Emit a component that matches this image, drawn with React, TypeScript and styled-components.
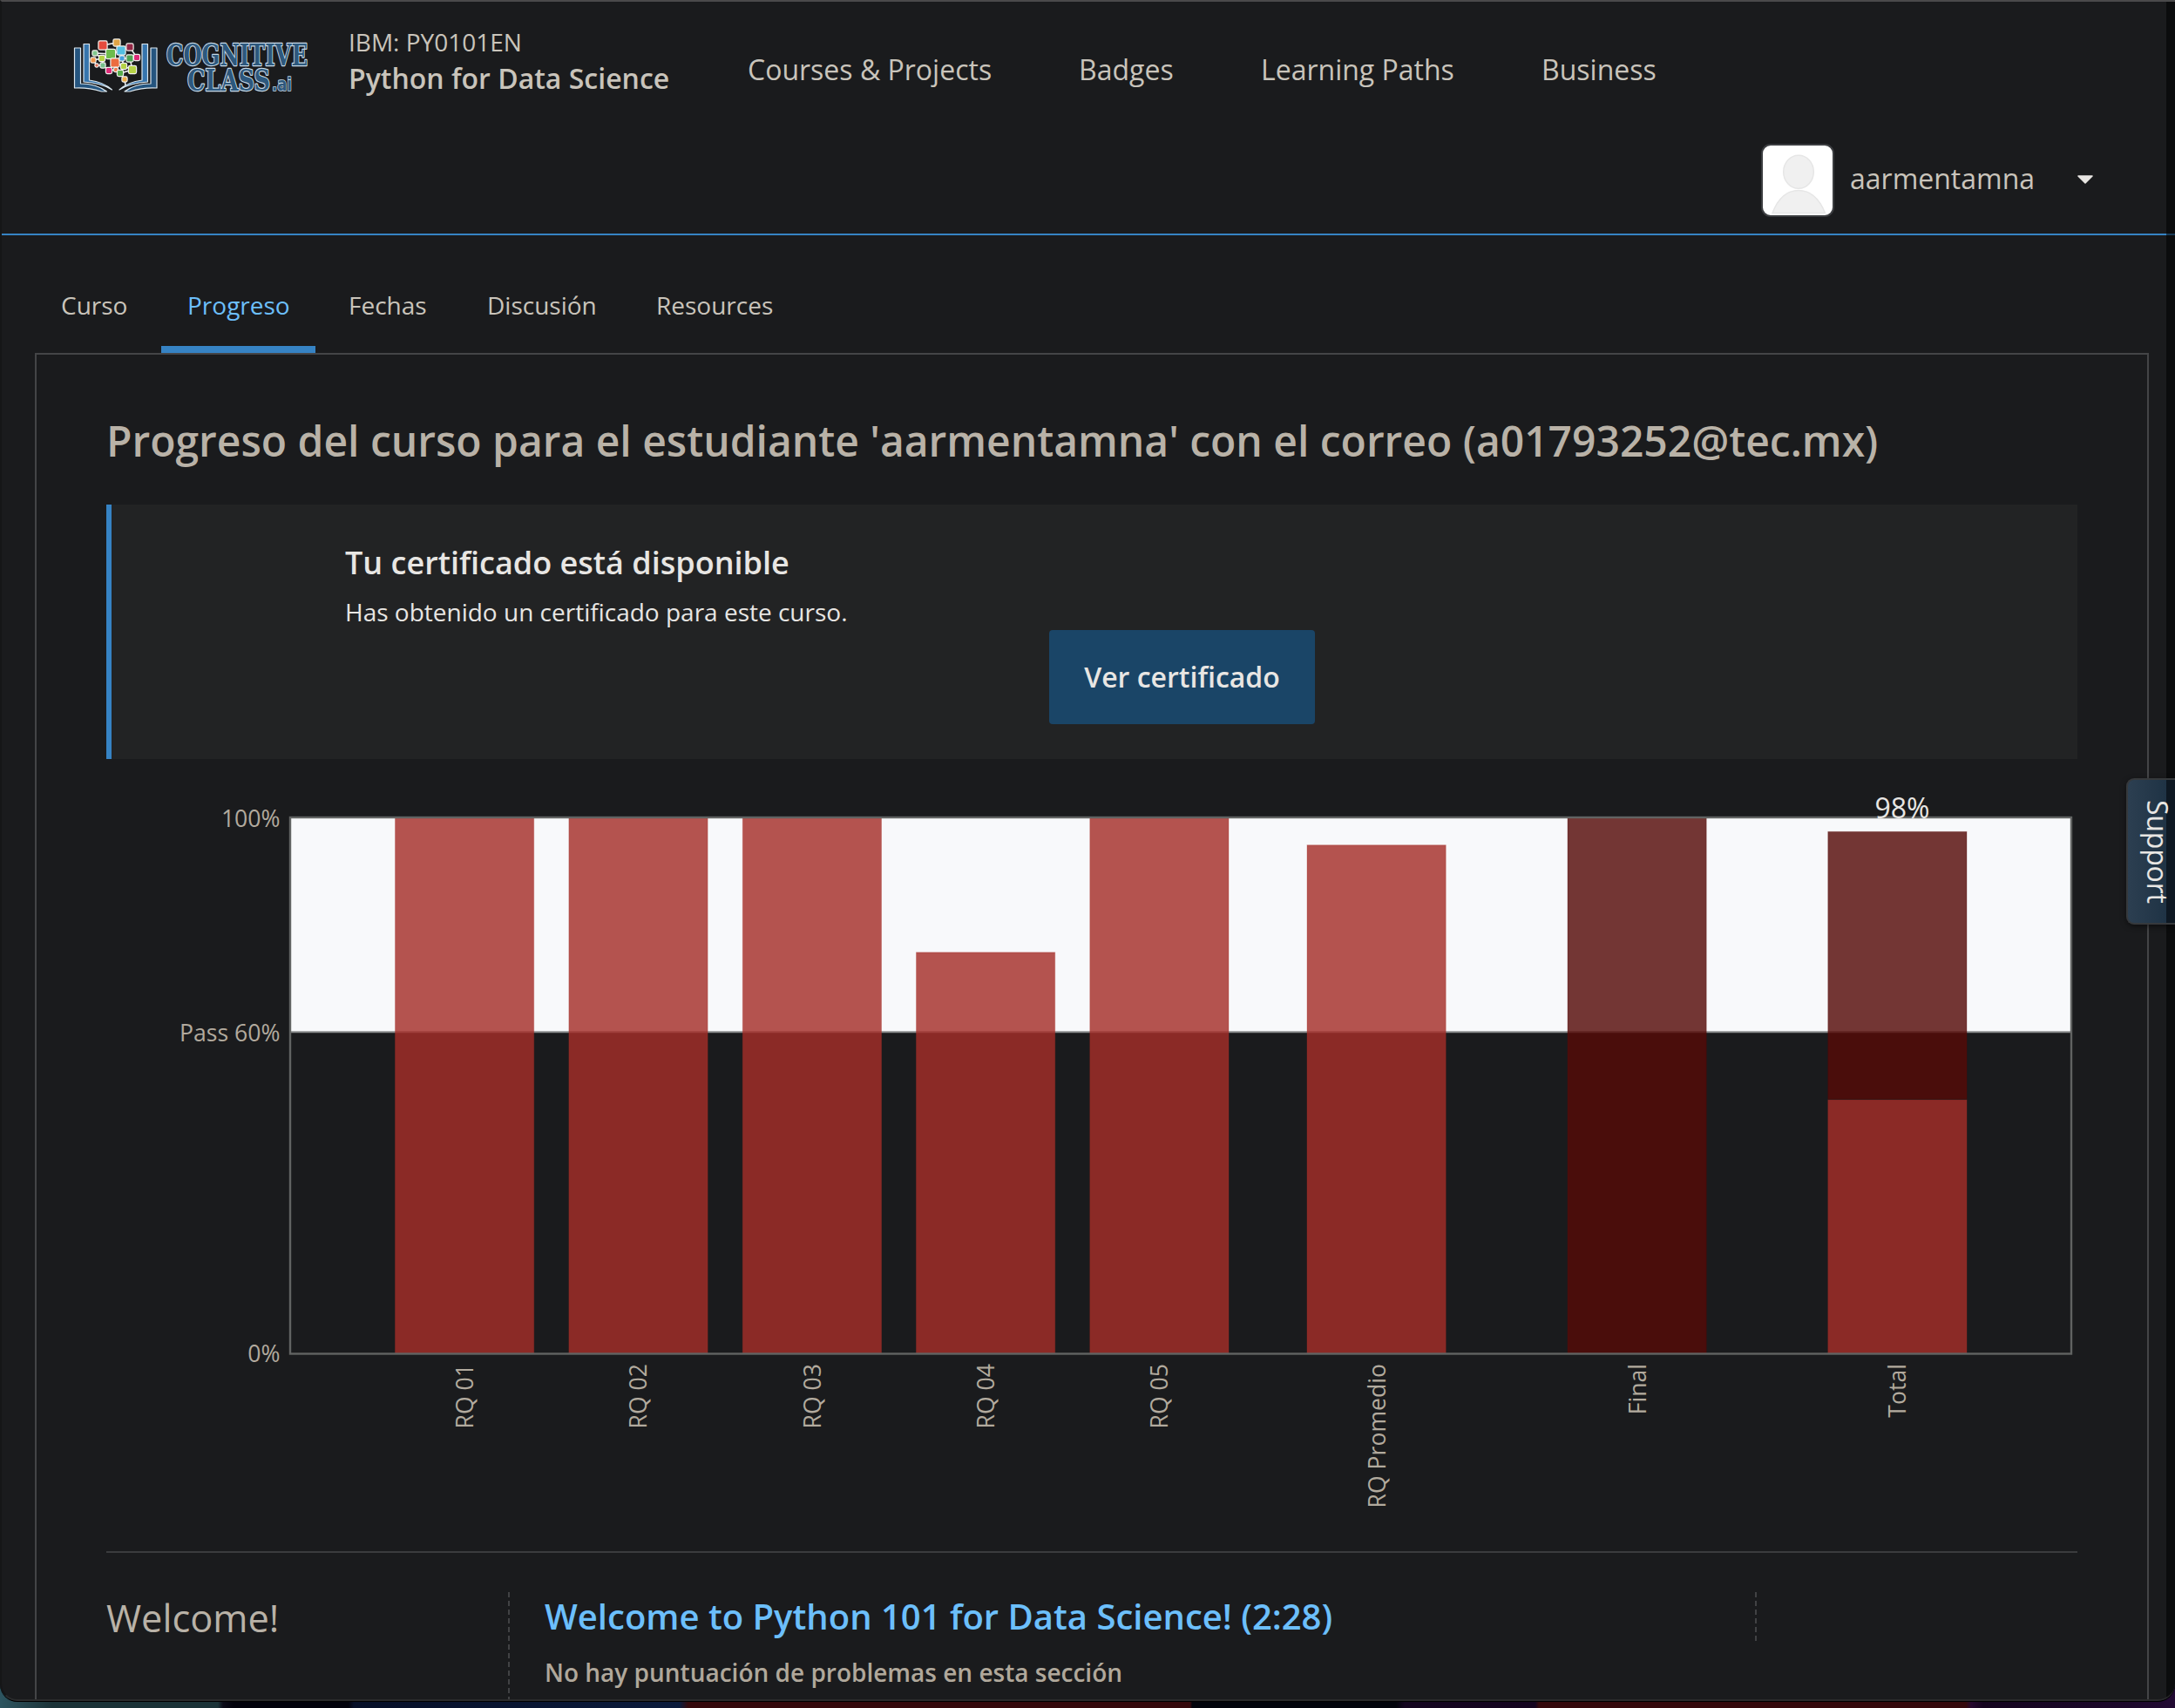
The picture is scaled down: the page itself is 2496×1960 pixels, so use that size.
import React from "react";
import styled, { createGlobalStyle } from "styled-components";

const GlobalStyle = createGlobalStyle`
  * { box-sizing: border-box; }
  html, body { margin: 0; padding: 0; }
  body {
    width: 2496px; height: 1960px; overflow: hidden;
    font-family: "Open Sans", "Noto Sans", sans-serif;
    background: #000;
  }
  h1, h2, h3, p { margin: 0; font-weight: inherit; }
`;

const Desktop = styled.div`
  width: 2496px;
  height: 1960px;
  overflow: hidden;
  background: linear-gradient(90deg, #2d5560 0, #1b3338 60px, #1b3338 250px, #0b0b18 256px, #02020c 268px, #02020c 400px, #060f28 406px, #0b1b3c 780px, #35090c 790px, #35090c 1366px, #02040c 1368px, #02040c 1602px, #140520 1612px, #14041f 1762px, #35090c 1766px, #35090c 2256px, #26082f 2262px, #14041f 2276px, #1c082b 2440px, #220a33 2496px);
`;

const Window = styled.div`
  position: relative;
  display: flex;
  flex-direction: column;
  height: 1953px;
  overflow: hidden;
  background: #1a1b1d;
  border-radius: 0 0 20px 20px;
  border-bottom: 1px solid #000;
`;

const WindowEdge = styled.div`
  position: absolute;
  inset: 0;
  border: 2px solid #2a2b2c;
  border-top-color: #4a4a4b;
  border-left-color: #151617;
  border-right: 0;
  border-radius: 0 0 20px 20px;
  pointer-events: none;
`;

const ScrollTrack = styled.div`
  position: absolute;
  top: 2px;
  right: 0;
  bottom: 2px;
  width: 10px;
  background: rgba(0, 0, 0, 0.55);
`;

const Header = styled.header`
  height: 270px;
  flex: none;
  border-bottom: 2px solid #3683c4;
  color: #c9c4bb;
`;

const HeaderTop = styled.div`
  display: flex;
  align-items: center;
  height: 160px;
  padding-left: 82px;
`;

const LogoArt = styled.svg`
  width: 274px;
  height: 72px;
  margin-top: -12px;
  overflow: visible;
`;

const CourseInfo = styled.div`
  width: 458px;
  margin: -23px 0 0 44px;
`;

const CourseOrg = styled.div`
  font-size: 28px;
  line-height: 42px;
`;

const CourseName = styled.div`
  font-size: 32px;
  font-weight: 600;
  line-height: 42px;
`;

const Nav = styled.nav`
  display: flex;
  gap: 100px;
  font-size: 32px;
  line-height: 44px;
`;

const NavItem = styled.a<{ $width: number }>`
  width: ${(p) => p.$width}px;
  white-space: nowrap;
`;

const UserMenu = styled.div`
  display: flex;
  justify-content: flex-end;
  align-items: center;
  height: 84px;
  margin-top: 5px;
  padding-right: 94px;
`;

const Avatar = styled.div`
  width: 84px;
  height: 84px;
  overflow: hidden;
  background: #fff;
  border: 2px solid #3b3d40;
  border-radius: 11px;
`;

const UserName = styled.span`
  width: 261px;
  margin: -5px 0 0 18px;
  font-size: 32px;
  line-height: 44px;
`;

const Caret = styled.svg`
  width: 18px;
  height: 10px;
  margin-top: -3px;
`;

const Tabs = styled.nav`
  display: flex;
  height: 135px;
  flex: none;
  padding: 56px 0 0 40px;
`;

const Tab = styled.a<{ $active?: boolean; $width: number }>`
  width: ${(p) => p.$width}px;
  margin-right: ${(p) => (p.$active ? 8 : 0)}px;
  padding: 4px 0 0 30px;
  font-size: 28px;
  line-height: 40px;
  white-space: nowrap;
  color: ${(p) => (p.$active ? "#6cbffb" : "#c9c4bb")};
  border-bottom: 8px solid ${(p) => (p.$active ? "#3683c4" : "transparent")};
`;

const Panel = styled.main`
  flex: 1;
  margin: 0 30px 0 40px;
  padding: 0 80px;
  border: 2px solid #444547;
  border-bottom: 0;
`;

const Title = styled.h1`
  padding-top: 66px;
  height: 172px;
  font-size: 48px;
  line-height: 66px;
  font-weight: 600;
  letter-spacing: -0.01px;
  white-space: nowrap;
  color: #b9b2a7;
`;

const Certificate = styled.section`
  height: 292px;
  padding: 44px 0 0 268px;
  border-left: 6px solid #3683c4;
  background: #222324;
  color: #e8e6e3;
`;

const CertificateTitle = styled.h2`
  font-size: 36px;
  line-height: 46px;
  font-weight: 600;
`;

const CertificateText = styled.p`
  padding-top: 13px;
  font-size: 28px;
  line-height: 40px;
`;

const CertificateButton = styled.button`
  display: block;
  width: 305px;
  height: 108px;
  margin: 1px 0 0 808px;
  padding: 0 0 2px;
  border: 0;
  border-radius: 4px;
  background: #1a4567;
  color: #e8e6e3;
  font: 600 32px "Open Sans", sans-serif;
`;

const Chart = styled.svg`
  display: block;
  width: 2262px;
  height: 909px;
  font-family: "Open Sans", sans-serif;
`;

const Section = styled.section`
  display: flex;
  height: 190px;
  padding-top: 45px;
  border-top: 2px solid #3b3c3e;
`;

const Chapter = styled.h2`
  width: 461px;
  font-size: 43.4px;
  line-height: 60px;
  color: #b9b2a7;
`;

const dashes = "repeating-linear-gradient(to bottom, #414244 0 6px, transparent 6px 10px)";

const Lessons = styled.div`
  width: 1431px;
  padding-left: 42px;
  background: ${dashes} left top / 2px 100% no-repeat;
`;

const LessonTitle = styled.h3`
  font-size: 40px;
  font-weight: 600;
  line-height: 56px;
  color: #6cbffb;
`;

const LessonNote = styled.p`
  padding-top: 18px;
  font-size: 28px;
  font-weight: 600;
  line-height: 37px;
  color: #b0a89b;
`;

const LessonScore = styled.div`
  width: 2px;
  height: 56px;
  background: ${dashes};
`;

const Support = styled.aside`
  position: absolute;
  top: 893px;
  right: 0;
  width: 56px;
  height: 168px;
  border: 2px solid #36393c;
  border-right: 0;
  border-radius: 9px 0 0 9px;
  background: linear-gradient(to right, #2c3f51, #1f3345 44px, #0e1822 44px);
  box-shadow: 0 2px 6px rgba(0, 0, 0, 0.5);
`;

const nodes: [number, number, number, string][] = [
  [36, 14, 9, "#e54b3c"], [52, 11, 7, "#dfa445"], [67, 16, 7, "#932846"],
  [57, 20, 9, "#54bfe1"], [45, 24, 10, "#6dbb4b"], [27, 23, 5, "#82c78e"],
  [35, 29, 6, "#b5d247"], [25, 31, 5, "#ef964a"], [50, 34, 9, "#ec6c3f"],
  [58, 29, 5, "#46a0dc"], [67, 29, 7, "#4ea251"], [75, 28, 6, "#de2b79"],
  [29, 37, 3, "#e86d52"], [36, 37, 5, "#76c08c"], [43, 43, 6, "#de2b79"],
  [51, 42, 4, "#ef7d50"], [60, 38, 6, "#b5d247"], [70, 42, 8, "#b5d247"],
  [56, 46, 6, "#5aae4d"], [61, 53, 5, "#eeac49"],
];

const links = "M36 14L52 11L57 20L67 16L75 28L67 29L70 42L60 38L56 46L61 53L62 60M36 14L45 24L57 20L58 29L67 29M45 24L27 23L35 29L25 31L29 37L36 37L35 29L45 24L50 34L58 29L60 38L50 34L43 43L36 37M43 43L51 42L56 46L70 42";

const Logo = () => (
  <LogoArt viewBox="0 0 274 72">
    <g stroke="#dbe7ef" strokeWidth="1.2" strokeLinejoin="round">
      <path fill="#25557f" d="M3.5 17h7v41q18 0 30 9h-6q-16-5-31-4z" />
      <path fill="#3675ad" d="M14 12.5h6.500v41.500q16 2 26 11q-13-8-32.500-9z" />
      <path fill="#25557f" d="M98 17h-7v41q-18 0-30 9h6q16-5 31-4z" />
      <path fill="#3675ad" d="M87.500 12.500h-6.500v41.500q-16 2-26 11q13-8 32.500-9z" />
    </g>
    <path d={links} fill="none" stroke="#eef1f2" strokeWidth="1.6" />
    {nodes.map(([x, y, s, fill]) => (
      <rect key={`${x}-${y}`} x={x - s / 2} y={y - s / 2} width={s} height={s} rx="1.2" fill={fill} stroke="#f2f2ee" strokeWidth="2.400" paintOrder="stroke" />
    ))}
    <g fontFamily="'DejaVu Serif', serif" fontWeight="700" fill="#2d587d" stroke="#c5d8e5" strokeWidth="2.4" paintOrder="stroke" strokeLinejoin="round">
      <text x="109" y="36.500" fontSize="34" textLength="162" lengthAdjust="spacingAndGlyphs">COGNITIVE</text>
      <text x="133" y="66" fontSize="33" textLength="95" lengthAdjust="spacingAndGlyphs">CLASS</text>
      <text x="230" y="66" fontSize="21" fontFamily="'DejaVu Sans', sans-serif" textLength="23" lengthAdjust="spacingAndGlyphs" strokeWidth="1.600">.ai</text>
    </g>
  </LogoArt>
);

const Bar = ({ x, from = 0, to, final }: { x: number; from?: number; to: number; final?: boolean }) => {
  const top = 682.5 - to * 6.155;
  const color = final ? "86,11,7" : "165,46,40";
  const inset = to < 100 ? 1 : 0;
  return (
    <rect x={x + 0.5} y={top + inset} width="159.2" height={(to - from) * 6.155 - inset} fill={`rgba(${color},0.82)`} stroke={`rgba(${color},0.3)`} strokeWidth="1" />
  );
};

const columns = [
  { label: "RQ 01", x: 331, value: 100 },
  { label: "RQ 02", x: 530.4, value: 100 },
  { label: "RQ 03", x: 729.8, value: 100 },
  { label: "RQ 04", x: 929, value: 75 },
  { label: "RQ 05", x: 1128.3, value: 100 },
  { label: "RQ Promedio", x: 1377.5, value: 95 },
  { label: "Final", x: 1676.5, value: 100, final: true },
  { label: "Total", x: 1975.3, value: 47.5 },
];

const ProgressChart = () => (
  <Chart viewBox="0 0 2262 909">
    <rect x="211" y="67" width="2044" height="246.5" fill="#f8f9fb" />
    <path d="M211 313.3H2255" stroke="#8b8d8e" strokeWidth="2" />
    {columns.map((c) => <Bar key={c.label} x={c.x} to={c.value} final={c.final} />)}
    <Bar x={1975.3} from={47.5} to={97.5} final />
    <rect x="211" y="67" width="2044" height="615.5" fill="none" stroke="#616362" strokeWidth="2.4" />
    <g fill="#b2aa9e" fontSize="26.6">
      <text x="199.5" y="77.5" textAnchor="end">100%</text>
      <text x="199.5" y="324" textAnchor="end">Pass 60%</text>
      <text x="199.5" y="692" textAnchor="end">0%</text>
      {columns.map((c) => (
        <text key={c.label} textAnchor="end" transform={`translate(${c.x + 90} 694) rotate(-90)`}>{c.label}</text>
      ))}
    </g>
    <text x="2061" y="67.5" fontSize="32" textAnchor="middle" fill="#e8e6e3">98%</text>
  </Chart>
);

const menu: [string, number][] = [["Courses & Projects", 280], ["Badges", 109], ["Learning Paths", 222], ["Business", 132]];
const tabs: [string, number][] = [["Curso", 145], ["Progreso", 177], ["Fechas", 159], ["Discusión", 194], ["Resources", 200]];

export default function App() {
  return (
    <Desktop>
      <GlobalStyle />
      <Window>
        <Header>
          <HeaderTop>
            <Logo />
            <CourseInfo>
              <CourseOrg>IBM: PY0101EN</CourseOrg>
              <CourseName>Python for Data Science</CourseName>
            </CourseInfo>
            <Nav>
              {menu.map(([label, width]) => <NavItem key={label} $width={width}>{label}</NavItem>)}
            </Nav>
          </HeaderTop>
          <UserMenu>
            <Avatar>
              <svg width="80" height="80" viewBox="0 0 80 80">
                <g fill="#f0f0f0" stroke="#e6e6e6" strokeWidth="1.5">
                  <ellipse cx="41" cy="30.3" rx="17.3" ry="19" />
                  <path d="M11 77.5Q21 51.5 41 51.5T71.5 77.5Z" />
                </g>
              </svg>
            </Avatar>
            <UserName>aarmentamna</UserName>
            <Caret viewBox="0 0 18 10"><path d="M1 1H17L9 9Z" fill="#e8e6e3" stroke="#e8e6e3" strokeWidth="1.6" strokeLinejoin="round" /></Caret>
          </UserMenu>
        </Header>
        <Tabs>
          {tabs.map(([label, width]) => <Tab key={label} $width={width} $active={label === "Progreso"}>{label}</Tab>)}
        </Tabs>
        <Panel>
          <Title>Progreso del curso para el estudiante 'aarmentamna' con el correo (a01793252@tec.mx)</Title>
          <Certificate>
            <CertificateTitle>Tu certificado está disponible</CertificateTitle>
            <CertificateText>Has obtenido un certificado para este curso.</CertificateText>
            <CertificateButton>Ver certificado</CertificateButton>
          </Certificate>
          <ProgressChart />
          <Section>
            <Chapter>Welcome!</Chapter>
            <Lessons>
              <LessonTitle>Welcome to Python 101 for Data Science! (2:28)</LessonTitle>
              <LessonNote>No hay puntuación de problemas en esta sección</LessonNote>
            </Lessons>
            <LessonScore />
          </Section>
        </Panel>
        <ScrollTrack />
        <Support>
          <svg width="54" height="164" viewBox="0 0 54 164">
            <text transform="translate(22 23) rotate(90)" fontFamily="'Open Sans', sans-serif" fontSize="32" fontWeight="500" fill="#e8e6e3" textLength="119">Support</text>
          </svg>
        </Support>
        <WindowEdge />
      </Window>
    </Desktop>
  );
}
